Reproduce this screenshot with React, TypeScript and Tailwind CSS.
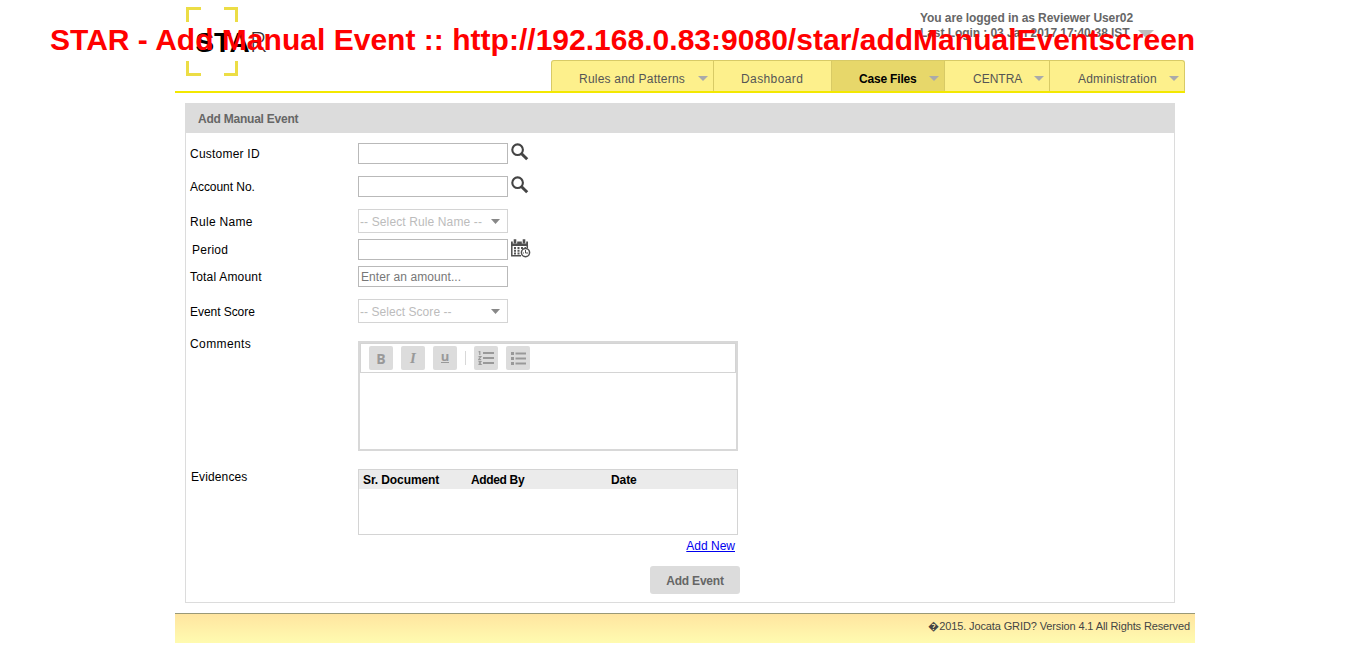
import type { ReactNode } from "react";

function Arrow({ className }: { className: string }) {
  return (
    <svg viewBox="0 0 10 5" preserveAspectRatio="none" className={className}>
      <path d="M0 0H10L5 5Z" fill="currentColor" />
    </svg>
  );
}

function Logo() {
  return (
    <svg width="100" height="80" viewBox="0 0 100 80" className="ml-[11px] block">
      <g fill="none" stroke="#ecdd45" strokeWidth="3">
        <path d="M1.5 22V8.5H15" />
        <path d="M38 8.5H50.5V22" />
        <path d="M1.5 61V74.5H15" />
        <path d="M38 74.5H50.5V61" />
      </g>
      <g fontFamily="Liberation Sans, Arial, sans-serif" fontSize="28" fill="#000">
        <text x="9.5 28 43.5" y="52" fontWeight="700">
          STA
        </text>
        <text x="63.5" y="52" fontFamily="Lato, sans-serif" fontWeight="300" fill="#333">
          R
        </text>
      </g>
    </svg>
  );
}

function NavItem({
  children,
  className,
  arrow = true,
}: {
  children: ReactNode;
  className: string;
  arrow?: boolean;
}) {
  return (
    <li
      className={`flex h-[31px] items-center justify-between border-t border-r border-[#d8ca66] pt-[5px] pr-[5px] whitespace-nowrap ${className}`}
    >
      <span>{children}</span>
      {arrow && <Arrow className="h-[5px] w-[10px] text-[#aaa]" />}
    </li>
  );
}

function Row({
  label,
  className,
  labelClass = "",
  children,
}: {
  label: string;
  className: string;
  labelClass?: string;
  children: ReactNode;
}) {
  return (
    <div className={`flex ${className}`}>
      <label className={`w-[168px] shrink-0 leading-4 ${labelClass}`}>{label}</label>
      {children}
    </div>
  );
}

function TextInput({ placeholder }: { placeholder?: string }) {
  return (
    <input
      placeholder={placeholder}
      className="h-[21px] w-[150px] border border-[#b9b9b9] bg-white px-[2px] text-[12px] tracking-[0.08px] outline-none placeholder:text-[#777]"
    />
  );
}

function Select({ children, className }: { children: ReactNode; className: string }) {
  return (
    <button
      className={`flex h-6 w-[150px] items-center justify-between border border-[#d4d4d4] pr-[7px] pl-px text-[#bcbcbc] ${className}`}
    >
      <span className="pt-[2px]">{children}</span>
      <Arrow className="h-[5px] w-[9px] text-[#888]" />
    </button>
  );
}

function SearchIcon() {
  return (
    <svg width="18" height="18" viewBox="0 0 18 18" fill="none" stroke="#444" className="mt-[-4px] ml-[3px]">
      <circle cx="6.6" cy="6.7" r="5.3" strokeWidth="2.1" />
      <path d="M10.6 10.7L16.2 16.2" strokeWidth="3" />
    </svg>
  );
}

function CalendarIcon() {
  return (
    <svg width="20" height="19" viewBox="0 0 20 19" className="-mt-[2px] ml-[3px]">
      <path d="M0 2.5H17V7H0Z" fill="#505050" />
      <path d="M0.8 6V16.7H10M16.3 6V9" fill="none" stroke="#505050" strokeWidth="1.5" />
      <path d="M4 0.5V4.5M13 0.5V4.5" stroke="#fff" strokeWidth="4.4" />
      <path d="M4 0.3V4.5M13 0.3V4.5" stroke="#505050" strokeWidth="2.6" />
      <path
        d="M3 9H5M6.5 9H8.5M10 9H12M13.5 9H15M3 11.8H5M6.5 11.8H8.5M3 14.5H5M6.5 14.5H8.5"
        stroke="#555"
        strokeWidth="1.9"
      />
      <circle cx="14.5" cy="13.6" r="4.1" fill="#fff" stroke="#505050" strokeWidth="1.5" />
      <path d="M14.5 11V14H17M12 14H13" fill="none" stroke="#505050" strokeWidth="1" />
    </svg>
  );
}

function ToolButton({ children, className = "" }: { children: ReactNode; className?: string }) {
  return (
    <button
      className={`flex size-6 items-center justify-center rounded-[2px] bg-[#dcdcdc] font-bold text-[#999] ${className}`}
    >
      {children}
    </button>
  );
}

function Editor() {
  return (
    <div className="h-[110px] w-[380px] border-2 border-[#d8d8d8]">
      <div className="flex h-[30px] items-center border border-[#d4d4d4] pl-2">
        <ToolButton className="font-['Open_Sans',sans-serif] text-[14px]">B</ToolButton>
        <ToolButton className="ml-2 font-['Liberation_Serif',serif] text-[15px] italic">I</ToolButton>
        <ToolButton className="ml-2 font-['Open_Sans',sans-serif] text-[13px]">
          <span className="-mt-[5px] h-[14px] border-b border-[#999] leading-[14px]">u</span>
        </ToolButton>
        <span className="ml-2 h-[14px] w-px bg-[#d8d8d8]" />
        <ToolButton className="ml-2">
          <svg width="16" height="14" viewBox="0 0 16 14">
            <path d="M5 2H16M5 7H16M5 12H16" stroke="#999" strokeWidth="2" />
            <path
              d="M0.6 1L1.8 0.4V4M0.5 5.7H2.9L0.6 8.6H3.2M0.5 10.6H2.8L1.6 12L2.9 13.4H0.4"
              fill="none"
              stroke="#999"
              strokeWidth="1.2"
            />
          </svg>
        </ToolButton>
        <ToolButton className="ml-2">
          <svg width="15" height="14" viewBox="0 0 15 14" fill="#999">
            <path d="M0 1H3V4H0ZM0 6H3V9H0ZM0 11H3V14H0ZM4.5 1.5H15V3.5H4.5ZM4.5 6.5H15V8.5H4.5ZM4.5 11.5H15V13.5H4.5Z" />
          </svg>
        </ToolButton>
      </div>
    </div>
  );
}

export default function App() {
  return (
    <div className="relative h-[658px] w-[1349px] overflow-hidden bg-white pl-[175px] font-['Liberation_Sans',Arial,sans-serif] text-[12px] text-black">
      <header className="flex h-[93px] w-[1010px] justify-between border-b-2 border-[#f3e800]">
        <Logo />
        <div className="flex w-[634px] flex-col justify-between">
          <div className="ml-[369px] pt-[11px] leading-[15px] font-bold whitespace-nowrap text-[#666]">
            <p className="tracking-[-0.08px]">You are logged in as Reviewer User02</p>
            <p className="flex items-center tracking-[-0.07px]">
              Last Login : 03 Jan 2017 17:40:38 IST
              <Arrow className="ml-2 h-2 w-4 text-[#bdbdbd]" />
            </p>
          </div>
          <ul className="flex text-[#555]">
            <NavItem className="w-[163px] rounded-tl-[3px] border-l bg-[#fdf08c] pl-[27px] tracking-[0.22px]">
              Rules and Patterns
            </NavItem>
            <NavItem arrow={false} className="w-[118px] bg-[#fdf08c] pl-[27px] tracking-[0.4px]">
              Dashboard
            </NavItem>
            <NavItem className="w-[113px] bg-[#e7d76a] pl-[27px] font-bold tracking-[-0.18px] text-black">
              Case Files
            </NavItem>
            <NavItem className="w-[105px] bg-[#fdf08c] pl-[28px]">CENTRA</NavItem>
            <NavItem className="w-[135px] rounded-tr-[3px] bg-[#fdf08c] pl-[28px] tracking-[0.2px]">
              Administration
            </NavItem>
          </ul>
        </div>
      </header>

      <main className="mt-[10px] ml-[10px] h-[500px] w-[990px] border border-t-0 border-[#dcdcdc]">
        <h1 className="-mx-px flex h-[30px] items-center bg-[#dcdcdc] pt-px pl-[13px] font-bold tracking-[-0.23px] text-[#666]">
          Add Manual Event
        </h1>
        <form className="pt-[10px] pl-1">
          <Row label="Customer ID" className="h-[21px] items-center" labelClass="tracking-[0.22px]">
            <TextInput />
            <SearchIcon />
          </Row>
          <Row label="Account No." className="mt-3 h-[21px] items-center" labelClass="-tracking-[0.05px]">
            <TextInput />
            <SearchIcon />
          </Row>
          <Row label="Rule Name" className="mt-3 h-6 items-center" labelClass="pt-[2px] tracking-[0.3px]">
            <Select className="tracking-[0.12px]">-- Select Rule Name --</Select>
          </Row>
          <Row label="Period" className="mt-[6px] h-[21px] items-center" labelClass="pl-[2px] tracking-[0.25px]">
            <TextInput />
            <CalendarIcon />
          </Row>
          <Row label="Total Amount" className="mt-[6px] h-[21px] items-center" labelClass="tracking-[0.2px]">
            <TextInput placeholder="Enter an amount..." />
          </Row>
          <Row label="Event Score" className="mt-3 h-6 items-center" labelClass="pt-[2px] tracking-[-0.05px]">
            <Select className="tracking-[0.05px]">-- Select Score --</Select>
          </Row>
          <Row label="Comments" className="mt-[18px]" labelClass="-mt-[5px] tracking-[0.4px]">
            <Editor />
          </Row>
          <Row label="Evidences" className="mt-[18px]" labelClass="pl-px tracking-[0.12px]">
            <div className="h-[66px] w-[380px] border border-[#d4d4d4]">
              <div className="flex h-[19px] items-center bg-[#ebebeb] pt-px pl-1 font-bold">
                <span className="w-[108px] tracking-[-0.1px]">Sr. Document</span>
                <span className="w-[140px] tracking-[-0.35px]">Added By</span>
                <span className="tracking-[-0.1px]">Date</span>
              </div>
            </div>
          </Row>
          <div className="flex w-[550px] flex-col items-end">
            <a className="mt-[3px] mr-[5px] leading-4 text-[#0000ee] underline">Add New</a>
            <button className="mt-3 h-7 w-[90px] rounded-[3px] bg-[#dcdcdc] pt-px font-bold tracking-[-0.2px] text-[#666]">
              Add Event
            </button>
          </div>
        </form>
      </main>

      <footer className="mt-[10px] flex h-[30px] w-[1020px] justify-end border-t border-[#999978] bg-linear-to-b from-[#ffe5a0] to-[#fffbb0] pt-1 pr-[5px] text-[11px] leading-4 tracking-[-0.12px] text-[#444]">
        �2015. Jocata GRID? Version 4.1 All Rights Reserved
      </footer>

      <div className="absolute top-[22px] left-[50px] text-[30px] leading-[35px] font-bold tracking-[0.02px] whitespace-nowrap text-[#ff0000]">
        STAR - Add Manual Event :: http://192.168.0.83:9080/star/addManualEventscreen
      </div>
    </div>
  );
}
